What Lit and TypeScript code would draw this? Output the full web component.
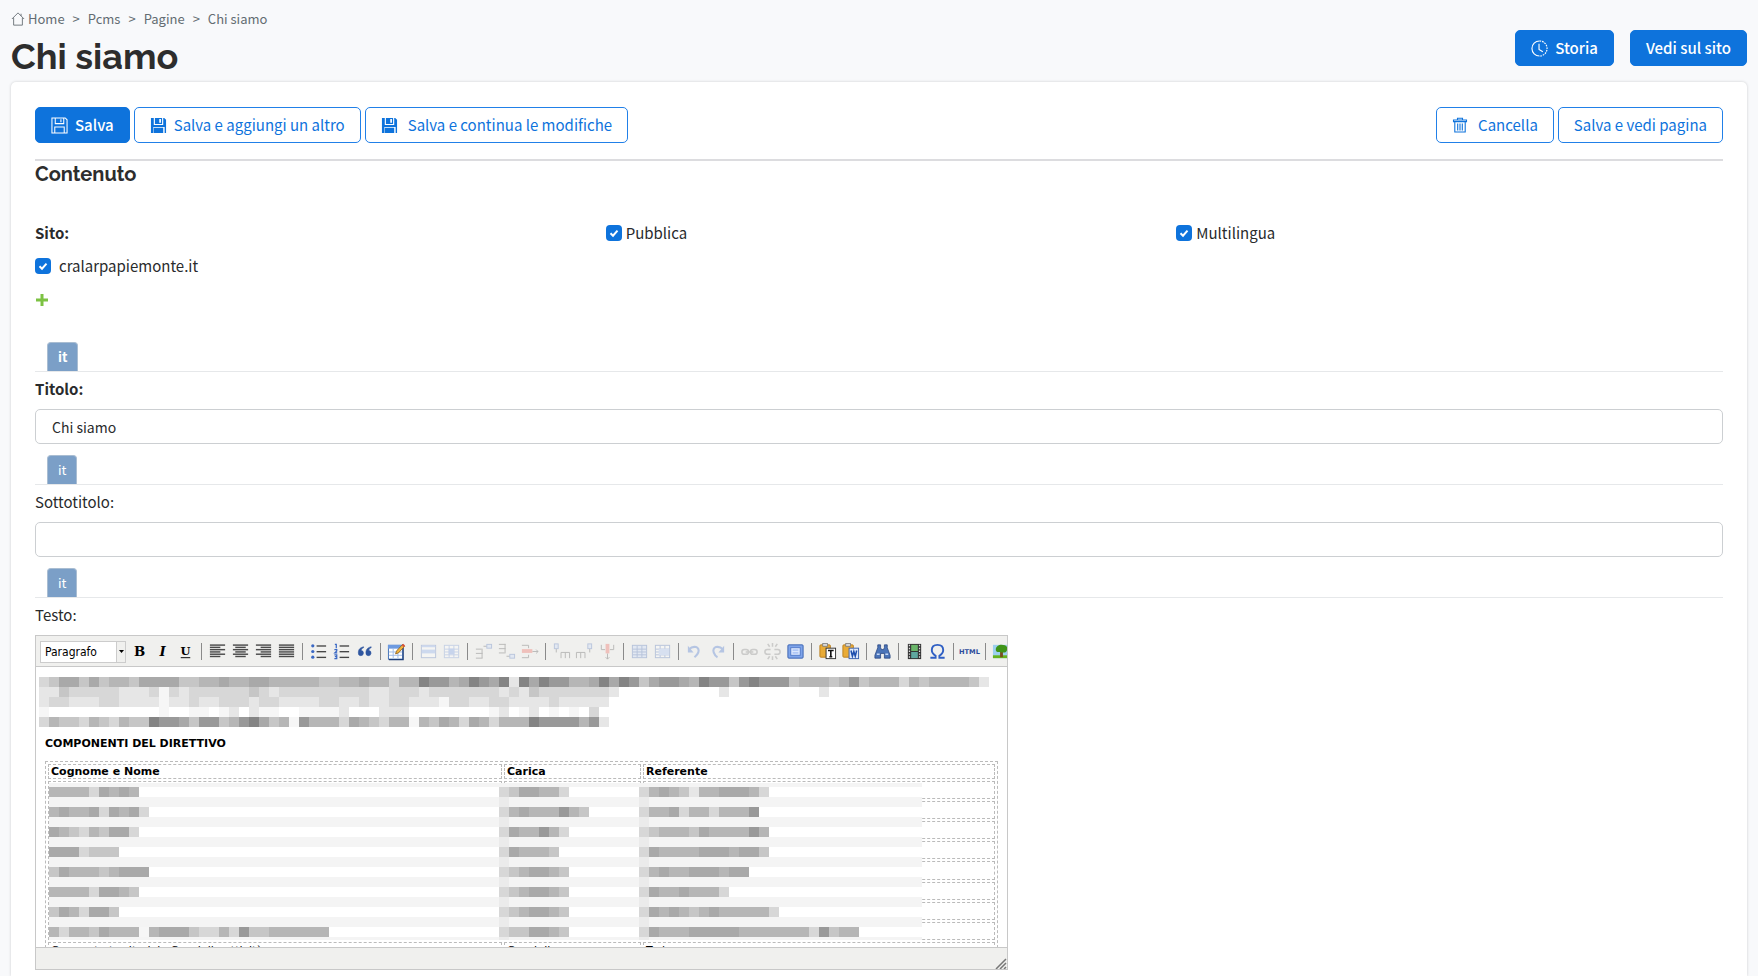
import { LitElement, html, svg, css, nothing, type TemplateResult } from "lit";
import { customElement, property } from "lit/decorators.js";

const CELL = 10;

/* Redaction mosaics: one character per cell, a hex grey level, "." for an empty cell. */
const INTRO_ROWS = [
  "dcaacacbbcaaaaccbbabbaabbbbbccbbabbdbb899ba89a8e8a899bba8a89ca99ab899c98999cbbbcb9cbbbdbcbbbbce",
  "eecdddddeeedfdeddddddcdedddddddddeedddedddddddedecddddddde..........e.........e",
  "eddeeeddeeeefeedeedddeddeeeeddeedeeddeeefddeeddeeeedeeeee",
  "f...........f..ff.fe.eff..ffffe...eee........fe.fe.f.f.d.",
  "dbccdbcdbcc899ac99cb98acbf9bbbdabcdbbfbcabdabdbbb89999b9e",
];

const MEMBERS = [
  { name: "bbbbdabab", role: "dcaabbd", contact: "dbabcebbaaabd" },
  { name: "babbadabad", role: "dbabbb9bc", contact: "dbbadbbdbbb9" },
  { name: "abcdbcaad", role: "dabb9bd", contact: "dcbbbcabbbb9b" },
  { name: "aaadccc", role: "dabbbc", contact: "dabbbbaaabaac" },
  { name: "cabbbcbaaa", role: "dcbaabc", contact: "dbabbaaabaa" },
  { name: "bbbbdaabc", role: "dcbaabc", contact: "dabbabbbd" },
  { name: "cabdaac", role: "dcbaabc", contact: "dababcbabbbbbd" },
  { name: "bdbbcabbbfbaaacddbd9ccbbbbbb", role: "dccaabc", contact: "dabbbaaaaabbbbbbbd9cbb" },
];

const SHADES: Record<string, string> = {
  "8": "#848484", "9": "#999999", a: "#a9a9a9", b: "#b6b6b6", c: "#c6c6c6", d: "#d7d7d7", e: "#e6e6e6", f: "#f6f6f6",
};

const cells = (row: string, x: number, y: number) =>
  [...row].map((c, i) =>
    c === "." ? nothing : svg`<rect x=${x + i * CELL} y=${y} width=${CELL} height=${CELL} fill=${SHADES[c]}></rect>`
  );

const GLYPHS: Record<string, TemplateResult> = {
  home: svg`<path d="M1 8 8 1l7 7M3 6.500V15h10V6.500M11.500 2v2.500" fill="none" stroke="currentColor"/>`,
  clock: svg`<path d="M9 17A8 8 0 0 1 9 1" fill="none" stroke="currentColor" stroke-width="1.200"/><path d="M9 1a8 8 0 0 1 0 16" fill="none" stroke="currentColor" stroke-width="1.200" stroke-dasharray="1.800 1"/><path d="M8.500 4v6l4 2.500" fill="none" stroke="currentColor" stroke-width="1.200"/>`,
  saveOutline: svg`<path d="M1 1h14l2 2v14H1z M4.500 1v6h9V1 M10.500 2.500v3 M4 17v-6.500h10V17" fill="none" stroke="currentColor" stroke-width="1.100"/>`,
  saveFill: svg`<path d="M1 1h3v7.500h10V1h1l2 2v14h-1.500v-6.500h-12V17H1z M5.200 1h7.600v6.300H5.200z M9.800 2v4h1.800V2z M4 11.500h10V17H4z" fill="currentColor" fill-rule="evenodd"/>`,
  trash: svg`<path d="M1.500 3h13v1.600h-13z M5.500 3V1.200h5V3 M2.800 4.800V15h10.400V4.800 M5.700 6.500v7 M8 6.500v7 M10.300 6.500v7" fill="none" stroke="currentColor" stroke-width="1.100"/>`,
  plus: svg`<path d="M6 0v12M0 6h12" stroke="#7cc243" stroke-width="3"/>`,
};

const lines = (x: number, ys: number[], width: number, color: string) =>
  ys.map((y) => svg`<rect x=${x} y=${y} width=${width} height="1.400" fill=${color}></rect>`);

const ALIGN_Y = [3, 5.4, 7.8, 10.2, 12.6, 15];
const align = (ws: number[], anchor: number) =>
  svg`${ALIGN_Y.map((y, i) => {
    const w = ws[i % 2];
    return svg`<rect x=${2 + (16 - w) * anchor} y=${y - 0.5} width=${w} height="1.500" fill="#4a4a4a"></rect>`;
  })}`;

const glyphText = (t: string, style: string, weight: number) =>
  svg`<text x="10" y="15" text-anchor="middle" font-family="DejaVu Serif, serif" font-size="14" font-weight=${weight} font-style=${style}>${t}</text>`;

const grid = (fill: string, stroke: string) => svg`
  <rect x="2.500" y="3.500" width="15" height="13" fill=${fill} stroke=${stroke}></rect>
  <path d="M3 7.500h14M3 10.500h14M3 13.500h14M7.500 4v12M12.500 4v12" stroke=${stroke} fill="none"></path>`;

const clipboard = svg`
  <rect x="2" y="3" width="11" height="13" rx="1" fill="#e9ab36" stroke="#b98022"/>
  <rect x="5" y="1.500" width="5" height="3" fill="#d9d9d9" stroke="#777" stroke-width=".8"/>`;

type Tool = { id: string; label: string; off?: boolean; art: TemplateResult };
const TOOLS: Tool[][] = [
  [
    { id: "bold", label: "Grassetto", art: glyphText("B", "normal", 700) },
    { id: "italic", label: "Corsivo", art: glyphText("I", "italic", 700) },
    { id: "underline", label: "Sottolineato", art: svg`<text x="10" y="14" text-anchor="middle" font-family="DejaVu Serif, serif" font-size="12" font-weight="700">U</text><path d="M5 16.500h10" stroke="#000"/>` },
  ],
  [
    { id: "left", label: "Allinea a sinistra", art: align([16, 11], 0) },
    { id: "center", label: "Centra", art: align([16, 11], 0.5) },
    { id: "right", label: "Allinea a destra", art: align([16, 11], 1) },
    { id: "full", label: "Giustifica", art: align([16, 16], 0) },
  ],
  [
    { id: "ul", label: "Elenco puntato", art: svg`${[4, 10, 16].map((y) => svg`<circle cx="4" cy=${y} r="1.700" fill="#3a68c4"></circle>`)}${lines(8, [3.5, 9.5, 15.5], 10, "#444")}` },
    { id: "ol", label: "Elenco numerato", art: svg`<path d="M3 2.500h1.500v4M2.500 8h2.500v1.500L3 11.500h2.500M2.500 13.500h2.500v4H2.500M3 15.500h2" fill="none" stroke="#3a68c4" stroke-width="1.300"/>${lines(8, [3.5, 9.5, 15.5], 10, "#444")}` },
    { id: "quote", label: "Citazione", art: svg`<path d="M9 5C5 6 3.500 8 3.500 11.500a2.700 2.700 0 1 0 3-2.500C6.700 7.500 7.500 6.500 9 6zM17 5c-4 1-5.500 3-5.500 6.500a2.700 2.700 0 1 0 3-2.500c.200-1.500 1-2.500 2.500-3z" fill="#2f56a0" stroke="#2f56a0" stroke-width=".6"/>` },
  ],
  [
    { id: "table", label: "Tabella", art: svg`<rect x="1.500" y="3.500" width="15" height="14.500" fill="#fff" stroke="#3f6eb5"/><path d="M1 3h16v4H1z" fill="#6d9ae0"/><path d="M2 10.500h14M2 14h14M6.500 7v10M11.500 7v10" stroke="#9dbbe8"/><path d="M17 6v12.500H2" stroke="#1f3f7a" stroke-width="1.300" fill="none"/><path d="M9 12.500 10 9.500 16.500 2.500l2 2-6.500 7z" fill="#f2b53f" stroke="#8a5a17" stroke-width=".8"/><path d="m15.500 3.500 1.500-1.700 2 2-1.500 1.700z" fill="#d9513c"/>` },
  ],
  [
    { id: "rowprops", label: "Proprietà riga", off: true, art: svg`<rect x="2.500" y="3.500" width="15" height="13" fill="#fff" stroke="#5a7bbd"/><path d="M3 8h14v4H3z" fill="#8fb0ee"/><path d="M3 3.500h14v2H3z" fill="#8fb0ee"/>` },
    { id: "cellprops", label: "Proprietà cella", off: true, art: svg`${grid("#fff", "#7c9bd6")}<path d="M7 7h6v6H7z" fill="#7ea2ea"/>` },
  ],
  [
    { id: "rowbefore", label: "Riga sopra", off: true, art: svg`<path d="M2 7.500h6M2 12h7M2 17h7M8.500 7v10M10 4.500h4" stroke="#555" fill="none"/><rect x="13.500" y="2.500" width="5" height="4" fill="#c9dafa" stroke="#5a7bbd"/>` },
    { id: "rowafter", label: "Riga sotto", off: true, art: svg`<path d="M2 2.500h7M2 7h7M2 11.500h6M8.500 2v10M10 15h4" stroke="#555" fill="none"/><rect x="13.500" y="13" width="5" height="4" fill="#c9dafa" stroke="#5a7bbd"/>` },
    { id: "rowdelete", label: "Elimina riga", off: true, art: svg`<path d="M2 3.500h7v3M2 16.500h7v-3M13 10h6M17 8l2 2-2 2" stroke="#555" fill="none"/><rect x="2" y="7.500" width="11" height="4" fill="#ee6a5f"/>` },
  ],
  [
    { id: "colbefore", label: "Colonna a sinistra", off: true, art: svg`<path d="M4.500 7v4M9.500 17v-6h9v6M14 11v6" stroke="#555" fill="none"/><rect x="2.500" y="2" width="4" height="5" fill="#c9dafa" stroke="#5a7bbd"/>` },
    { id: "colafter", label: "Colonna a destra", off: true, art: svg`<path d="M15.500 7v4M1.500 17v-6h9v6M6 11v6" stroke="#555" fill="none"/><rect x="13.500" y="2" width="4" height="5" fill="#c9dafa" stroke="#5a7bbd"/>` },
    { id: "coldelete", label: "Elimina colonna", off: true, art: svg`<path d="M3.500 3v5h4M16.500 3v5h-4M10 12v6M8 16l2 2 2-2" stroke="#555" fill="none"/><rect x="8" y="2" width="4" height="10" fill="#ee6a5f"/>` },
  ],
  [
    { id: "split", label: "Dividi celle", off: true, art: grid("#c9dafa", "#4f73b8") },
    { id: "merge", label: "Unisci celle", off: true, art: svg`${grid("#fff", "#4f73b8")}<rect x="6" y="7" width="11" height="7" fill="#a9c4f5"></rect>` },
  ],
  [
    { id: "undo", label: "Annulla", off: true, art: svg`<path d="M4 8c5-5 12-3 10 3-1 3-3 4-4 5" fill="none" stroke="#4a78cf" stroke-width="2.200"/><path d="M3 4v7h6z" fill="#4a78cf"/>` },
    { id: "redo", label: "Ripeti", off: true, art: svg`<path d="M16 8C11 3 4 5 6 11c1 3 2 4 4 5" fill="none" stroke="#4a78cf" stroke-width="2.200"/><path d="M17 4v7h-6z" fill="#4a78cf"/>` },
  ],
  [
    { id: "link", label: "Inserisci link", off: true, art: svg`<g fill="none" stroke="#888" stroke-width="1.600"><rect x="2" y="8" width="7" height="5" rx="2.500"/><rect x="11" y="8" width="7" height="5" rx="2.500"/><path d="M6 10.500h8"/></g>` },
    { id: "unlink", label: "Rimuovi link", off: true, art: svg`<g fill="none" stroke="#888" stroke-width="1.600"><path d="M8 8H4.500a2.500 2.500 0 0 0 0 5H8M12 8h3.500a2.500 2.500 0 0 1 0 5H12M10 1v4M5 2l2 3M15 2l-2 3M10 15v4M5 18l2-3M15 18l-2-3"/></g>` },
    { id: "fullscreen", label: "Schermo intero", art: svg`<rect x="2" y="3" width="16" height="14" rx="1" fill="#7ea4ea" stroke="#3a62b0"/><rect x="5" y="6" width="10" height="8" fill="#dbe7fd" stroke="#5079c9"/><path d="M7 8.500h6M7 11.500h6" stroke="#8badf0"/>` },
  ],
  [
    { id: "pastetext", label: "Incolla come testo", art: svg`${clipboard}<rect x="8.500" y="6.500" width="10" height="11" fill="#fff" stroke="#333"/><path d="M10.500 9h6M13.500 9v6.500M12 15.500h3" stroke="#111" stroke-width="1.700"/>` },
    { id: "pasteword", label: "Incolla da Word", art: svg`${clipboard}<rect x="8.500" y="6.500" width="10" height="11" fill="#dfe9fb" stroke="#3a62b0"/><path d="m10.500 9 1.500 6 1.500-5 1.500 5 1.500-6" fill="none" stroke="#1f4fae" stroke-width="1.600"/>` },
  ],
  [
    { id: "find", label: "Trova", art: svg`<path d="M5 3h3v3l1 2h2l1-2V3h3v3l3 8v3h-6v-5H8v5H2v-3l3-8z" fill="#4b74b8" stroke="#27447e" stroke-width=".8"/><path d="M4 13h3M13 13h3" stroke="#c6d8f6" stroke-width="1.600"/>` },
  ],
  [
    { id: "media", label: "Media", art: svg`<rect x="3" y="2" width="14" height="16" fill="#333"/><rect x="6.500" y="3" width="7" height="6.500" fill="#6ab66a"/><rect x="6.500" y="10.500" width="7" height="6.500" fill="#5fa8a0"/><path d="M4.700 3v14M15.300 3v14" stroke="#ddd" stroke-width="1.300" stroke-dasharray="1.500 1.500"/>` },
    { id: "char", label: "Carattere speciale", art: svg`<path d="M2.500 16.500h5.500v-2C5.500 13 4 11 4 8.500 4 5 6.500 3 10 3s6 2 6 5.500c0 2.500-1.500 4.500-4 6v2h5.500" fill="none" stroke="#2f5fc4" stroke-width="2"/>` },
  ],
  [{ id: "html", label: "Modifica HTML", art: svg`<text x="10" y="13" text-anchor="middle" font-family="DejaVu Sans, sans-serif" font-size="7" font-weight="700" fill="#2c4c9c">HTML</text>` }],
  [{ id: "image", label: "Immagine", art: svg`<rect x="1" y="3" width="17" height="14" fill="#9cd0ee"/><path d="M1 14h17v3H1z" fill="#66b31f"/><path d="M8.500 10h3v6h-3z" fill="#7a4f1e"/><path d="M4 8c0-3 3-5 6-5 4 0 7 2 6 5-1 4-4 3-6 3-3 0-6 0-6-3z" fill="#3f9418"/>` }],
];

@customElement("ui-icon")
export class UiIcon extends LitElement {
  @property() name = "";
  @property({ type: Number }) size = 17;
  static styles = css`
    :host { display: inline-flex; flex: none; }
    .glyph { display: block; }
  `;
  render() {
    const box = ({ home: 16, trash: 16, plus: 12 } as Record<string, number>)[this.name] ?? 18;
    return html`<svg class="glyph" width=${this.size} height=${this.size} viewBox="0 0 ${box} ${box}" aria-hidden="true">${GLYPHS[this.name]}</svg>`;
  }
}

@customElement("rich-editor")
export class RichEditor extends LitElement {
  static styles = css`
    :host { display: block; max-width: 973px; box-sizing: border-box; border: 1px solid #c8c8c8; font-family: "DejaVu Sans", Verdana, sans-serif; color: #000; }
    .toolbar { display: flex; align-items: center; height: 29px; padding: 1px 0 0 4px; overflow: hidden; background: #f0f0ee; border-bottom: 1px solid #c8c8c8; }
    .format { position: relative; flex: none; width: 86px; margin-right: 2px; }
    .select { display: block; width: 100%; height: 22px; padding: 0 4px; border: 1px solid #ccc; border-radius: 0; background: #fff; color: #000; appearance: none; font: 12px "DejaVu Sans Condensed", "DejaVu Sans", sans-serif; }
    .arrow { position: absolute; inset: 1px 1px 1px auto; width: 8px; display: grid; place-items: center; background: #f0f0ee; border-left: 1px solid #ccc; pointer-events: none; }
    .group { display: flex; flex: none; align-items: center; }
    .group + .group::before { content: ""; width: 1px; height: 17px; margin: 0 4px; background: #8a8a8a; }
    .tool { display: grid; place-items: center; flex: none; width: 23px; height: 22px; padding: 0; border: 0; background: none; }
    .tool:disabled { opacity: 0.35; }
    .tool svg { display: block; width: 19px; height: 19px; overflow: visible; }
    .body { box-sizing: border-box; height: 280px; padding: 10px 9px 0 3px; overflow: hidden; background: #fff; font-size: 11px; line-height: 14px; }
    .mosaic { display: block; }
    .lead { margin: 10px 6px; font-size: 11px; line-height: 14px; font-weight: 700; }
    .sheet { position: relative; margin-left: 6px; }
    .table { width: 100%; height: 202px; table-layout: fixed; border: 1px dashed #bbb; border-collapse: separate; border-spacing: 2px; }
    .name { width: 448px; }
    .role { width: 131px; }
    .cell { height: 13px; padding: 0 2px; border: 1px dashed #bbb; text-align: left; font-weight: 400; vertical-align: middle; line-height: 13px; }
    .head { font-weight: 700; }
    .cover { position: absolute; left: 4px; top: 22px; }
    .status { display: flex; justify-content: flex-end; align-items: flex-end; height: 21px; background: #f0f0ee; border-top: 1px solid #c8c8c8; }
  `;
  render() {
    return html`
      <div class="toolbar" role="toolbar" aria-label="Formattazione">
        <div class="format">
          <select class="select" aria-label="Formato"><option>Paragrafo</option></select>
          <span class="arrow"><svg width="5" height="3" viewBox="0 0 5 3"><path d="M0 0h5L2.500 3z" /></svg></span>
        </div>
        ${TOOLS.map(
          (g) => html`<div class="group">
            ${g.map(
              (t) => html`<button type="button" class="tool" title=${t.label} aria-label=${t.label} ?disabled=${t.off}>
                <svg viewBox="0 0 20 20" aria-hidden="true">${t.art}</svg>
              </button>`
            )}
          </div>`
        )}
      </div>
      <div class="body">
        <svg class="mosaic" width="950" height="50" shape-rendering="crispEdges" aria-hidden="true">
          ${INTRO_ROWS.map((r, i) => cells(r, 0, i * CELL))}
        </svg>
        <p class="lead">COMPONENTI DEL DIRETTIVO</p>
        <div class="sheet">
          <table class="table">
            <thead>
              <tr><th class="cell head name">Cognome e Nome</th><th class="cell head role">Carica</th><th class="cell head">Referente</th></tr>
            </thead>
            <tbody>
              ${MEMBERS.map(() => html`<tr><td class="cell"></td><td class="cell"></td><td class="cell"></td></tr>`)}
              <tr><td class="cell">Comparto territoriale Consiglio attività</td><td class="cell">Consigliere</td><td class="cell">Torino</td></tr>
            </tbody>
          </table>
          <svg class="cover" width="873" height="157" shape-rendering="crispEdges" aria-hidden="true">
            <rect width="873" height="157" fill="#f4f4f4"></rect>
            ${MEMBERS.map((m, i) => {
              const y = 4 + i * 20;
              return svg`
                <rect x="0" y=${y} width="873" height="10" fill="#fff"></rect>
                <rect x="450" y=${y} width="10" height="20" fill="#ebebeb"></rect>
                <rect x="590" y=${y} width="10" height="20" fill="#ebebeb"></rect>
                ${cells(m.name, 0, y)}${cells(m.role, 450, y)}${cells(m.contact, 590, y)}`;
            })}
          </svg>
        </div>
      </div>
      <div class="status">
        <svg width="12" height="11" viewBox="0 0 12 11" aria-hidden="true"><path d="M1 11 11 1M5 11l6-6M9 11l2-2" stroke="#777" stroke-width="1.500" /></svg>
      </div>
    `;
  }
}

@customElement("app-root")
export class AppRoot extends LitElement {
  static styles = css`
    :host { display: flex; flex-direction: column; min-height: 100vh; box-sizing: border-box; background: #f8f9fb; color: #292b2c; font: 15px/24px "Noto Sans CJK SC", "Open Sans", sans-serif; }
    .top { display: flex; justify-content: space-between; align-items: flex-start; padding: 8px 11px 0; }
    .crumbs { display: flex; gap: 8px; margin: 0; padding: 0; list-style: none; font-size: 13px; line-height: 22px; color: #636c72; }
    .crumb { display: flex; gap: 8px; align-items: center; }
    .crumb + .crumb::before { content: ">"; }
    .crumb a { display: flex; align-items: center; gap: 3px; color: inherit; text-decoration: none; }
    .title { margin: 8px 0; font: 700 36px/36px "Raleway", "Lato", sans-serif; color: #2d2d2d; }
    .actions { display: flex; gap: 16px; padding-top: 22px; }
    .btn { box-sizing: border-box; display: inline-flex; align-items: center; justify-content: center; gap: 7px; height: 36px; padding: 0 15px; border: 1px solid #2180e8; border-radius: 5px; background: #fff; color: #0e73dc; font: inherit; text-decoration: none; white-space: nowrap; }
    .primary { background: #0e73dc; border-color: #0e73dc; color: #fff; font-weight: 500; }
    .card { flex: 1; margin: 0 11px; padding: 25px 24px 0; background: #fff; border-radius: 5px 5px 0 0; box-shadow: 0 0 3px rgba(0, 0, 0, 0.18); }
    .bar { display: flex; gap: 4px; padding-bottom: 16px; border-bottom: 2px solid #dcdcdf; }
    .push { margin-left: auto; }
    .section { margin: 0 0 33px; font: 700 20px/27px "Raleway", "Lato", sans-serif; color: #2d2d2d; }
    .grid { display: grid; grid-template-columns: repeat(3, 1fr); column-gap: 24px; align-items: start; margin-bottom: 29px; }
    .site { display: flex; flex-direction: column; gap: 9px; align-items: flex-start; }
    .strong { font-weight: 700; }
    .check { display: flex; align-items: center; gap: 4px; }
    .wide { gap: 10px; }
    .roomy { gap: 8px; }
    .box { flex: none; width: 16px; height: 16px; margin: 0; appearance: none; border: 1px solid #aaa; border-radius: 4px; }
    .box:checked { border: 0; background: #0e73dc url("data:image/svg+xml,%3Csvg xmlns='http://www.w3.org/2000/svg' viewBox='0 0 16 16'%3E%3Cpath d='M4.500 8.300l2.500 2.400 4.500-5' fill='none' stroke='%23fff' stroke-width='2'/%3E%3C/svg%3E"); }
    .add { display: flex; padding: 7px 1px; border: 0; background: none; }
    .field { display: block; padding-bottom: 11px; }
    .field:last-child { padding-bottom: 0; }
    .tabs { display: flex; padding-left: 12px; border-bottom: 1px solid #e6e8ea; }
    .tab { height: 29px; padding: 0 10px; border: 1px solid #a9bdd2; border-bottom: 0; border-radius: 4px 4px 0 0; background: #7b9fc7; color: #fff; font: inherit; font-size: 13px; }
    .tab.strong { font-weight: 700; }
    .label { display: block; padding: 5px 0 8px; }
    .input { display: block; box-sizing: border-box; width: 100%; height: 35px; padding: 0 16px; border: 1px solid #cccfd2; border-radius: 5px; background: #fff; color: inherit; font: inherit; font-size: 14px; }
  `;

  private tabs(strong = false) {
    return html`<div class="tabs" role="tablist"><button type="button" role="tab" aria-selected="true" class="tab ${strong ? "strong" : ""}">it</button></div>`;
  }

  render() {
    return html`
      <header class="top">
        <div>
          <nav aria-label="Percorso">
            <ol class="crumbs">
              <li class="crumb"><a href="#"><ui-icon name="home" size="14"></ui-icon>Home</a></li>
              <li class="crumb"><a href="#">Pcms</a></li>
              <li class="crumb"><a href="#">Pagine</a></li>
              <li class="crumb">Chi siamo</li>
            </ol>
          </nav>
          <h1 class="title">Chi siamo</h1>
        </div>
        <div class="actions">
          <a class="btn primary" href="#"><ui-icon name="clock"></ui-icon>Storia</a>
          <a class="btn primary" href="#">Vedi sul sito</a>
        </div>
      </header>
      <main class="card">
        <div class="bar">
          <button type="submit" class="btn primary"><ui-icon name="saveOutline"></ui-icon>Salva</button>
          <button type="submit" class="btn"><ui-icon name="saveFill"></ui-icon>Salva e aggiungi un altro</button>
          <button type="submit" class="btn wide"><ui-icon name="saveFill"></ui-icon>Salva e continua le modifiche</button>
          <button type="button" class="btn wide push"><ui-icon name="trash" size="16"></ui-icon>Cancella</button>
          <button type="submit" class="btn">Salva e vedi pagina</button>
        </div>
        <h2 class="section">Contenuto</h2>
        <div class="grid">
          <div class="site">
            <span class="strong">Sito:</span>
            <label class="check roomy"><input class="box" type="checkbox" checked />cralarpapiemonte.it</label>
            <button type="button" class="add" aria-label="Aggiungi sito"><ui-icon name="plus" size="12"></ui-icon></button>
          </div>
          <label class="check"><input class="box" type="checkbox" checked />Pubblica</label>
          <label class="check"><input class="box" type="checkbox" checked />Multilingua</label>
        </div>
        <div class="field">
          ${this.tabs(true)}
          <label class="label strong" for="titolo">Titolo:</label>
          <input class="input" id="titolo" type="text" value="Chi siamo" />
        </div>
        <div class="field">
          ${this.tabs()}
          <label class="label" for="sottotitolo">Sottotitolo:</label>
          <input class="input" id="sottotitolo" type="text" />
        </div>
        <div class="field">
          ${this.tabs()}
          <span class="label">Testo:</span>
          <rich-editor></rich-editor>
        </div>
      </main>
    `;
  }
}
